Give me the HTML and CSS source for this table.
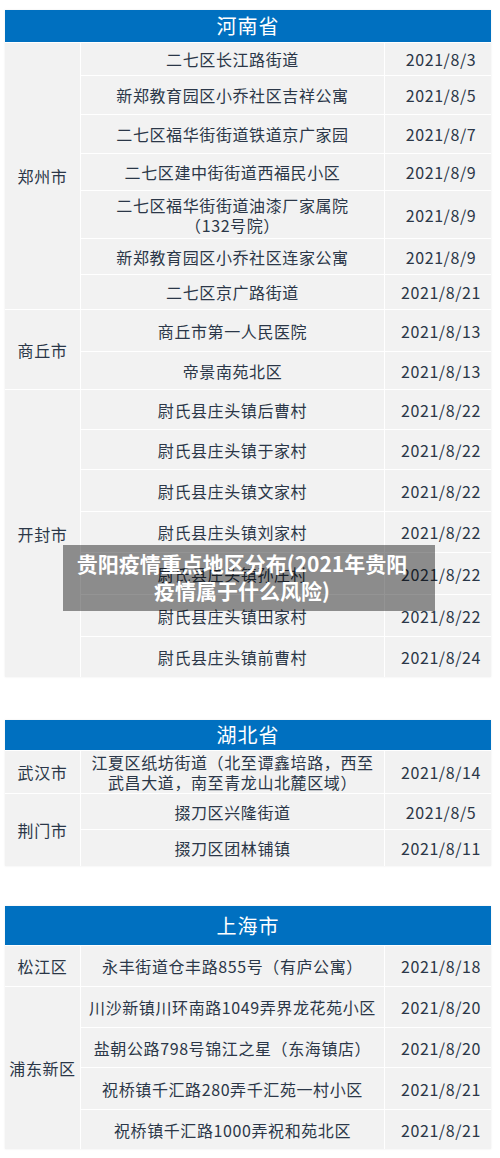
FILE: index.html
```html
<!DOCTYPE html>
<html lang="zh-CN">
<head>
<meta charset="utf-8">
<title>贵阳疫情重点地区分布</title>
<link rel="stylesheet" href="styles.css">
</head>
<body>
<div class="page">
  <section class="sheet sheet-henan">
    <div class="head">河南省</div>
    <div class="cell city span7">郑州市</div>
    <div class="cell addr">二七区长江路街道</div><div class="cell date">2021/8/3</div>
    <div class="cell addr">新郑教育园区小乔社区吉祥公寓</div><div class="cell date">2021/8/5</div>
    <div class="cell addr">二七区福华街街道铁道京广家园</div><div class="cell date">2021/8/7</div>
    <div class="cell addr">二七区建中街街道西福民小区</div><div class="cell date">2021/8/9</div>
    <div class="cell addr two">二七区福华街街道油漆厂家属院<br>（132号院）</div><div class="cell date">2021/8/9</div>
    <div class="cell addr">新郑教育园区小乔社区连家公寓</div><div class="cell date">2021/8/9</div>
    <div class="cell addr">二七区京广路街道</div><div class="cell date">2021/8/21</div>
    <div class="cell city span2">商丘市</div>
    <div class="cell addr">商丘市第一人民医院</div><div class="cell date">2021/8/13</div>
    <div class="cell addr">帝景南苑北区</div><div class="cell date">2021/8/13</div>
    <div class="cell city span7">开封市</div>
    <div class="cell addr">尉氏县庄头镇后曹村</div><div class="cell date">2021/8/22</div>
    <div class="cell addr">尉氏县庄头镇于家村</div><div class="cell date">2021/8/22</div>
    <div class="cell addr">尉氏县庄头镇文家村</div><div class="cell date">2021/8/22</div>
    <div class="cell addr">尉氏县庄头镇刘家村</div><div class="cell date">2021/8/22</div>
    <div class="cell addr">尉氏县庄头镇孙庄村</div><div class="cell date">2021/8/22</div>
    <div class="cell addr">尉氏县庄头镇田家村</div><div class="cell date">2021/8/22</div>
    <div class="cell addr">尉氏县庄头镇前曹村</div><div class="cell date">2021/8/24</div>
  </section>

  <section class="sheet sheet-hubei">
    <div class="head">湖北省</div>
    <div class="cell city">武汉市</div>
    <div class="cell addr two">江夏区纸坊街道（北至谭鑫培路，西至<br>武昌大道，南至青龙山北麓区域）</div><div class="cell date">2021/8/14</div>
    <div class="cell city span2">荆门市</div>
    <div class="cell addr">掇刀区兴隆街道</div><div class="cell date">2021/8/5</div>
    <div class="cell addr">掇刀区团林铺镇</div><div class="cell date">2021/8/11</div>
  </section>

  <section class="sheet sheet-shanghai">
    <div class="head">上海市</div>
    <div class="cell city">松江区</div>
    <div class="cell addr">永丰街道仓丰路855号（有庐公寓）</div><div class="cell date">2021/8/18</div>
    <div class="cell city span4">浦东新区</div>
    <div class="cell addr">川沙新镇川环南路1049弄界龙花苑小区</div><div class="cell date">2021/8/20</div>
    <div class="cell addr">盐朝公路798号锦江之星（东海镇店）</div><div class="cell date">2021/8/20</div>
    <div class="cell addr">祝桥镇千汇路280弄千汇苑一村小区</div><div class="cell date">2021/8/21</div>
    <div class="cell addr">祝桥镇千汇路1000弄祝和苑北区</div><div class="cell date">2021/8/21</div>
  </section>

  <div class="caption">贵阳疫情重点地区分布(2021年贵阳<br>疫情属于什么风险)</div>
</div>
</body>
</html>
```

FILE: styles.css
```css
html, body {
  margin: 0;
  padding: 0;
  background: #ffffff;
}

body {
  font-family: "Noto Sans CJK SC", "Noto Sans", sans-serif;
  color: #2b3748;
}

.page {
  position: relative;
  width: 500px;
  height: 1158px;
  overflow: hidden;
}

.sheet {
  display: grid;
  grid-template-columns: 75px 303px 1fr;
  gap: 1px;
  width: 486px;
  margin-left: 5px;
  background: #ffffff;
  box-shadow: 0 0 2px rgba(0, 0, 0, 0.08);
}

.sheet-henan {
  margin-top: 10px;
  grid-template-rows: 32px 32px 38px 38px 36px 47px 35px 34px 41px 37px 39px 39px 41px 40px 41px 41px 40px;
}

.sheet-hubei {
  margin-top: 43px;
  grid-template-rows: 30px 42px 35px 36px;
}

.sheet-shanghai {
  margin-top: 40px;
  grid-template-rows: 39px 40px 40px 39px 41px 39px;
}

.head {
  grid-column: 1 / -1;
  background: #0070c0;
  color: #ffffff;
  font-size: 20px;
  letter-spacing: 1px;
  display: flex;
  align-items: center;
  justify-content: center;
  line-height: 1;
}

.cell {
  background: #f2f2f2;
  display: flex;
  align-items: center;
  justify-content: center;
  text-align: center;
  font-size: 16px;
  letter-spacing: 0.6px;
  line-height: 22px;
  white-space: nowrap;
}

.cell.two {
  line-height: 20px;
}

.city { grid-column: 1; }
.addr { grid-column: 2; }
.date { grid-column: 3; padding-left: 6px; }

.span2 { grid-row: span 2; }
.span4 { grid-row: span 4; }
.span7 { grid-row: span 7; }

.caption {
  position: absolute;
  left: 63px;
  top: 545px;
  width: 372px;
  height: 66px;
  box-sizing: border-box;
  padding: 5px 14px 0 0;
  background: rgba(0, 0, 0, 0.42);
  color: #ffffff;
  font-size: 21px;
  font-weight: 700;
  line-height: 27px;
  text-align: center;
}
```
